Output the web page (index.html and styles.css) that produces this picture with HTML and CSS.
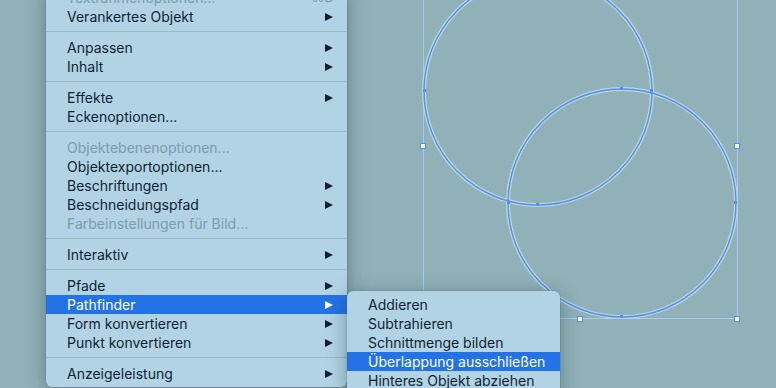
FILE: index.html
```html
<!DOCTYPE html>
<html>
<head>
    <title>Objekt-Menü</title>
    <link rel="stylesheet" href="styles.css">
</head>
<body>
    <div class="canvas">
        <svg class="artboard" width="776" height="388" viewBox="0 0 776 388">
            <!-- bounding box -->
            <rect x="423.5" y="-27.5" width="314" height="346" fill="none" stroke="#a9cbf2" stroke-width="1"/>
            <!-- circles: light halo, then blue path -->
            <circle cx="538" cy="91" r="114" fill="none" stroke="#c0d5d6" stroke-width="4"/>
            <circle cx="622" cy="203" r="114" fill="none" stroke="#c0d5d6" stroke-width="4"/>
            <circle cx="538" cy="91" r="114" fill="none" stroke="#4c90f6" stroke-width="1.4"/>
            <circle cx="622" cy="203" r="114" fill="none" stroke="#4c90f6" stroke-width="1.4"/>
            <!-- anchor points -->
            <g fill="#4c90f6">
                <rect x="423" y="89" width="3" height="3"/>
                <rect x="650" y="89" width="3" height="3"/>
                <rect x="536" y="203" width="3" height="3"/>
                <rect x="620" y="87" width="3" height="3"/>
                <rect x="507" y="201" width="3" height="3"/>
                <rect x="734" y="201" width="3" height="3"/>
                <rect x="620" y="315" width="3" height="3"/>
            </g>
            <!-- handles -->
            <g fill="#ffffff" stroke="#4c90f6" stroke-width="1">
                <rect x="420.5" y="143.5" width="5" height="5"/>
                <rect x="734.5" y="143.5" width="5" height="5"/>
                <rect x="577.5" y="316.5" width="5" height="5"/>
                <rect x="734.5" y="316.5" width="5" height="5"/>
                <rect x="420.5" y="316.5" width="5" height="5"/>
            </g>
        </svg>

        <div class="menu main-menu">
            <div class="item disabled">Textrahmenoptionen... <span class="shortcut">⌘B</span></div>
            <div class="item">Verankertes Objekt <span class="arrow"></span></div>
            <div class="sep"></div>
            <div class="item">Anpassen <span class="arrow"></span></div>
            <div class="item">Inhalt <span class="arrow"></span></div>
            <div class="sep"></div>
            <div class="item">Effekte <span class="arrow"></span></div>
            <div class="item">Eckenoptionen...</div>
            <div class="sep"></div>
            <div class="item disabled">Objektebenenoptionen...</div>
            <div class="item">Objektexportoptionen...</div>
            <div class="item">Beschriftungen <span class="arrow"></span></div>
            <div class="item">Beschneidungspfad <span class="arrow"></span></div>
            <div class="item disabled">Farbeinstellungen für Bild...</div>
            <div class="sep"></div>
            <div class="item">Interaktiv <span class="arrow"></span></div>
            <div class="sep"></div>
            <div class="item">Pfade <span class="arrow"></span></div>
            <div class="item active">Pathfinder <span class="arrow"></span></div>
            <div class="item">Form konvertieren <span class="arrow"></span></div>
            <div class="item">Punkt konvertieren <span class="arrow"></span></div>
            <div class="sep"></div>
            <div class="item">Anzeigeleistung <span class="arrow"></span></div>
        </div>

        <div class="menu sub-menu">
            <div class="item">Addieren</div>
            <div class="item">Subtrahieren</div>
            <div class="item">Schnittmenge bilden</div>
            <div class="item active">Überlappung ausschließen</div>
            <div class="item">Hinteres Objekt abziehen</div>
        </div>
    </div>
</body>
</html>
```

FILE: styles.css
```css
body {
    margin: 0;
    background-color: #91b1b8;
    font-family: Inter, "Noto Sans", sans-serif;
    overflow: hidden;
}

.canvas {
    position: relative;
    width: 776px;
    height: 388px;
}

.artboard {
    position: absolute;
    left: 0;
    top: 0;
}

.menu {
    position: absolute;
    background-color: #b1d3e3;
    border-radius: 6px;
    box-shadow: 0 4px 20px rgba(20, 50, 60, 0.4), 0 0 0 0.5px rgba(60, 90, 100, 0.3);
    padding: 4px 0;
    font-size: 14px;
    color: #101f33;
}

.main-menu {
    left: 46px;
    top: -16px;
    width: 301px;
}

.sub-menu {
    left: 347px;
    top: 291px;
    width: 213px;
}

.item {
    height: 19px;
    line-height: 19px;
    padding: 0 14px 0 21px;
    display: flex;
    justify-content: space-between;
    align-items: center;
    white-space: nowrap;
}

.item.disabled {
    color: #7d9bad;
}

.item.active {
    background-color: #2473e6;
    color: #ffffff;
}

.sep {
    height: 1px;
    margin: 5px 0 6px;
    background-color: #9bbbc9;
}

.arrow {
    width: 0;
    height: 0;
    border-left: 8px solid #101f33;
    border-top: 4.5px solid transparent;
    border-bottom: 4.5px solid transparent;
}

.item.active .arrow {
    border-left-color: #ffffff;
}

.shortcut {
    color: #7d9bad;
    font-size: 13px;
}
```
